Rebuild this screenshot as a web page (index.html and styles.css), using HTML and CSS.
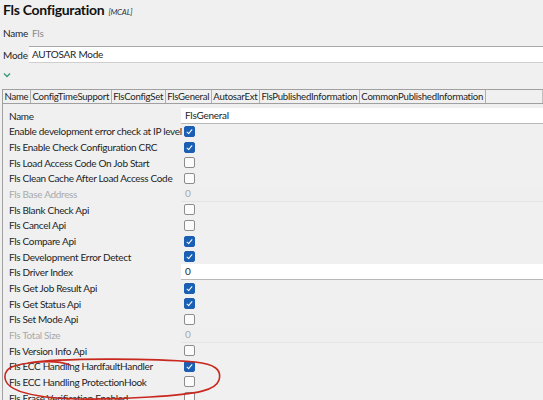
FILE: index.html
```html
<!DOCTYPE html>
<html>
<head>
<meta charset="utf-8">
<link rel="stylesheet" href="styles.css">
</head>
<body>
<div class="page">
  <div class="title"><span class="title-main">Fls Configuration</span><span class="title-tag">[MCAL]</span></div>
  <div class="meta-row"><span class="meta-label">Name</span><span class="meta-value">Fls</span></div>
  <div class="meta-row mode-row"><span class="meta-label">Mode</span><div class="mode-input">AUTOSAR Mode</div></div>
  <div class="chevron"><svg width="8" height="6" viewBox="0 0 8 6"><path d="M1 1.5 L4 4.5 L7 1.5" fill="none" stroke="#3a9a7a" stroke-width="1.4"/></svg></div>
  <div class="table">
    <div class="tabs">
      <div class="tab">Name</div>
      <div class="tab">ConfigTimeSupport</div>
      <div class="tab">FlsConfigSet</div>
      <div class="tab">FlsGeneral</div>
      <div class="tab">AutosarExt</div>
      <div class="tab">FlsPublishedInformation</div>
      <div class="tab">CommonPublishedInformation</div>
      <div class="tab tab-fill"></div>
    </div>
    <div class="rows">
      <div class="row"><span class="label">Name</span><div class="field">FlsGeneral</div></div>
      <div class="row"><span class="label">Enable development error check at IP level</span><span class="cb on"></span></div>
      <div class="row"><span class="label">Fls Enable Check Configuration CRC</span><span class="cb on"></span></div>
      <div class="row"><span class="label">Fls Load Access Code On Job Start</span><span class="cb"></span></div>
      <div class="row"><span class="label">Fls Clean Cache After Load Access Code</span><span class="cb"></span></div>
      <div class="row dis"><span class="label">Fls Base Address</span><div class="field ro">0</div></div>
      <div class="row"><span class="label">Fls Blank Check Api</span><span class="cb"></span></div>
      <div class="row"><span class="label">Fls Cancel Api</span><span class="cb"></span></div>
      <div class="row"><span class="label">Fls Compare Api</span><span class="cb on"></span></div>
      <div class="row"><span class="label">Fls Development Error Detect</span><span class="cb on"></span></div>
      <div class="row"><span class="label">Fls Driver Index</span><div class="field">0</div></div>
      <div class="row"><span class="label">Fls Get Job Result Api</span><span class="cb on"></span></div>
      <div class="row"><span class="label">Fls Get Status Api</span><span class="cb on"></span></div>
      <div class="row"><span class="label">Fls Set Mode Api</span><span class="cb"></span></div>
      <div class="row dis"><span class="label">Fls Total Size</span><div class="field ro">0</div></div>
      <div class="row"><span class="label">Fls Version Info Api</span><span class="cb"></span></div>
      <div class="row"><span class="label">Fls ECC Handling HardfaultHandler</span><span class="cb on"></span></div>
      <div class="row"><span class="label">Fls ECC Handling ProtectionHook</span><span class="cb"></span></div>
      <div class="row"><span class="label">Fls Erase Verification Enabled</span><span class="cb"></span></div>
    </div>
  </div>
  <svg class="annot" width="230" height="50" viewBox="0 0 230 50">
    <path d="M28 7 C 60 2, 150 2, 195 6 C 215 8, 222 14, 219 24 C 216 34, 200 38, 150 41 C 110 44, 60 44, 40 40 C 20 37, 6 32, 5 22 C 4 12, 12 8, 40 6 C 52 5, 62 6, 70 9" fill="none" stroke="#c8281e" stroke-width="1.6" stroke-linecap="round"/>
  </svg>
</div>
</body>
</html>
```

FILE: styles.css
```css
html, body {
  margin: 0;
  padding: 0;
  background: #f0f0f0;
}
body {
  font-family: "Lato", "Noto Sans", sans-serif;
  font-size: 10px;
  letter-spacing: -0.25px;
  color: #1e1e1e;
  overflow: hidden;
  width: 543px;
  height: 400px;
}
.page {
  position: relative;
  padding-top: 1px;
}
.title {
  display: flex;
  align-items: baseline;
  padding-left: 3px;
  height: 21px;
}
.title-main {
  font-size: 14px;
  font-weight: 700;
  color: #111;
  letter-spacing: -0.3px;
}
.title-tag {
  font-size: 8px;
  font-style: italic;
  color: #333;
  margin-left: 4px;
}
.meta-row {
  display: flex;
  align-items: center;
  padding-left: 3px;
  height: 22px;
}
.meta-label {
  width: 26px;
}
.meta-value {
  color: #8a8a8a;
  margin-left: 3px;
}
.mode-row {
  height: 17px;
  margin-top: 2px;
}
.mode-input {
  flex: 1;
  height: 15px;
  line-height: 15px;
  background: #fff;
  border-top: 1px solid #a8a8a8;
  border-bottom: 1px solid #cfcfcf;
  padding-left: 3px;
}
.chevron {
  height: 24px;
  padding-left: 3px;
  display: flex;
  align-items: center;
}
.table {
  margin-left: 2px;
  border-left: 1px solid #a0a0a0;
}
.tabs {
  display: flex;
  border-top: 1px solid #a0a0a0;
  border-bottom: 1px solid #a0a0a0;
  height: 13px;
  margin-top: 2px;
}
.tab {
  line-height: 13px;
  padding: 0 1.5px;
  border-right: 1px solid #b0b0b0;
  white-space: nowrap;
  font-size: 9.6px;
}
.tab-fill {
  width: 55px;
  border-right: 1px solid #c0c0c0;
}
.rows {
  padding-top: 4px;
}
.row {
  display: flex;
  align-items: center;
  height: 15.67px;
}
.label {
  flex: none;
  box-sizing: border-box;
  width: 178px;
  padding-left: 6px;
  white-space: nowrap;
  letter-spacing: -0.32px;
}
.dis .label, .field.ro {
  color: #a9a9a9;
}
.field {
  flex: 1;
  height: 15px;
  line-height: 15px;
  background: #fff;
  border-bottom: 1px solid #b8b8b8;
  padding-left: 4px;
}
.field.ro {
  background: #efefef;
  border-bottom: 1px solid #e4e4e4;
}
.cb {
  flex: none;
  width: 9px;
  height: 9px;
  margin-left: 3px;
  border: 1px solid #8d8d8d;
  border-radius: 2px;
  background: #fbfbfb;
  position: relative;
}
.cb.on {
  background: #1a5fb4;
  border-color: #1a5fb4;
}
.cb.on::after {
  content: "";
  position: absolute;
  left: 3px;
  top: 1px;
  width: 2px;
  height: 5px;
  border-right: 1.3px solid #fff;
  border-bottom: 1.3px solid #fff;
  transform: rotate(40deg);
}
.annot {
  position: absolute;
  left: 0;
  top: 356px;
}
```
